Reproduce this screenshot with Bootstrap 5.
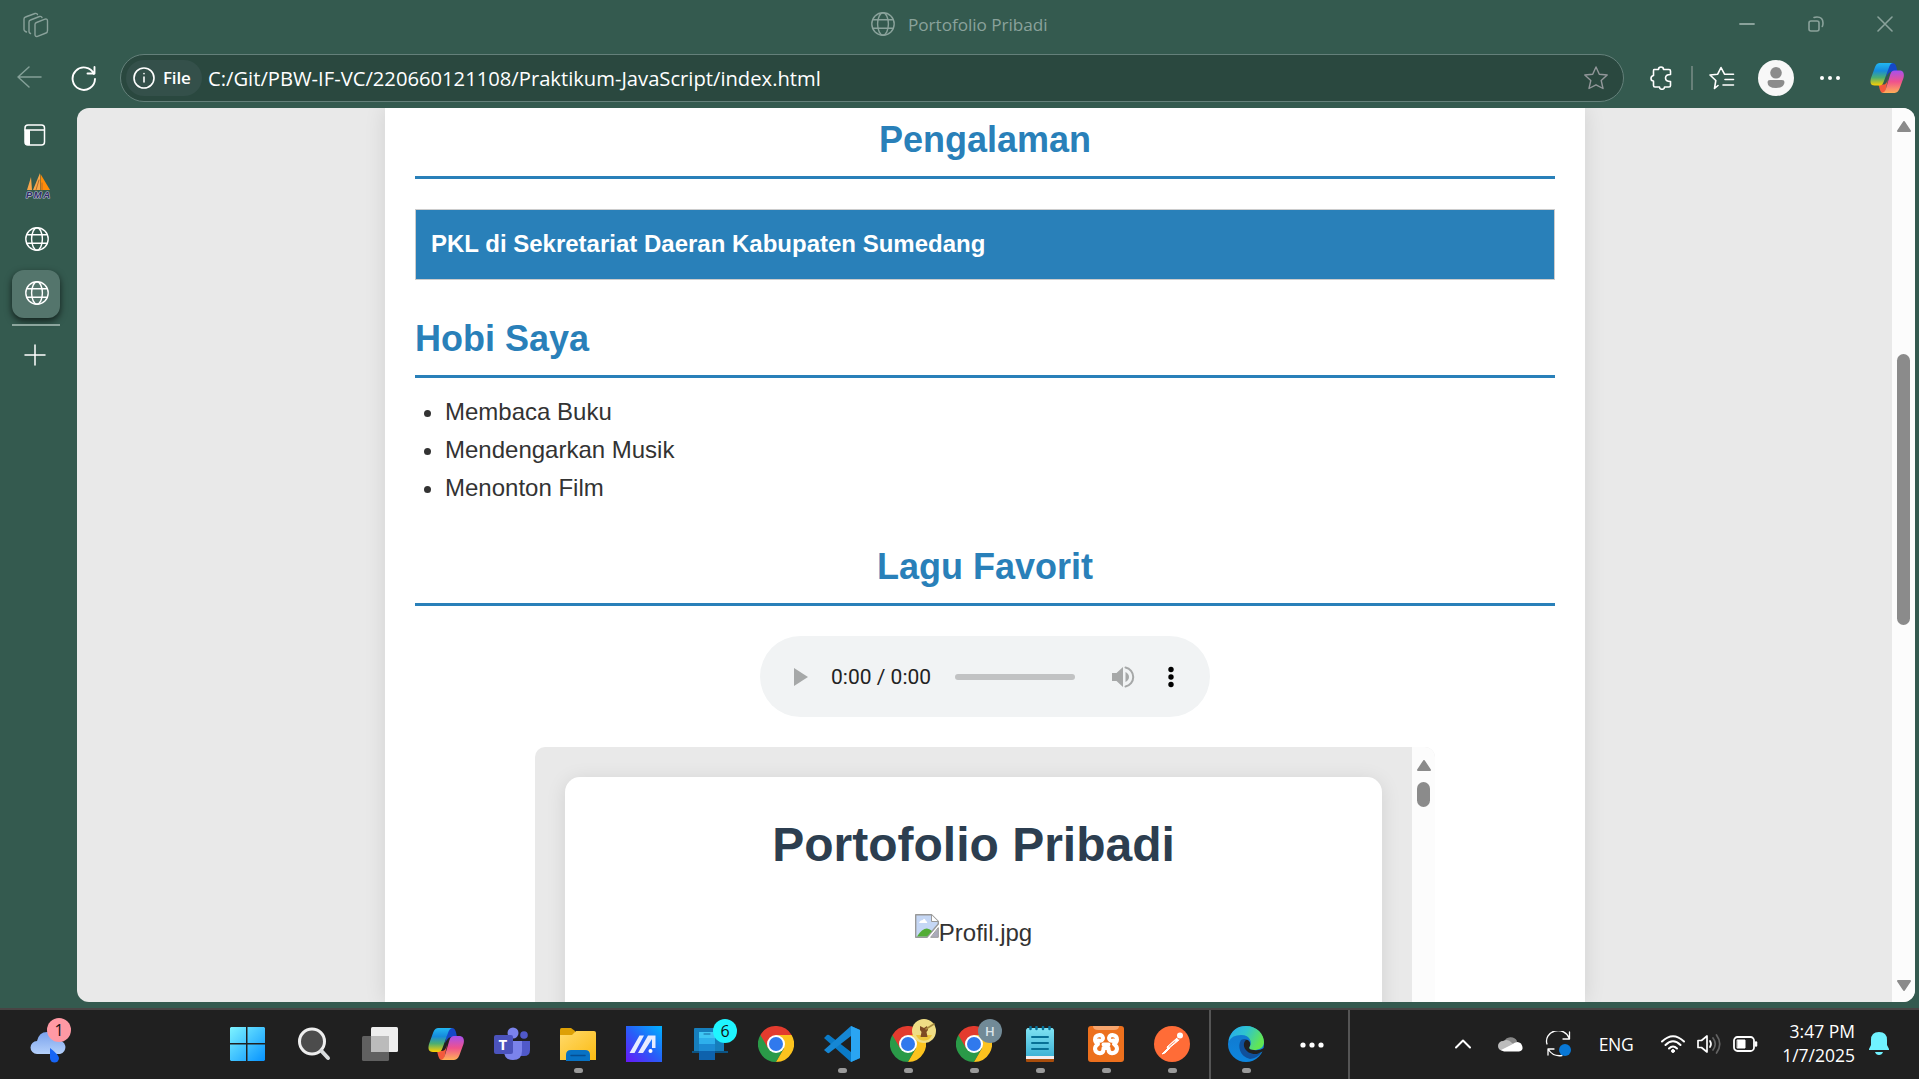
<!DOCTYPE html>
<html lang="id">
<head>
<meta charset="utf-8">
<title>Portofolio Pribadi</title>
<link href="https://cdn.jsdelivr.net/npm/bootstrap@5.3.0/dist/css/bootstrap.min.css" rel="stylesheet">
<style>
  :root { --frame:#345a4f; --blue:#2980b9; }
  body { background:var(--frame); color:#fff; font-family:"Open Sans","Noto Sans",sans-serif; height:1079px; }
  svg { display:block; flex:none; fill:none; stroke-linecap:round; stroke-linejoin:round; }
  .titlebar { height:54px; color:#8aa29b; }
  .titlebar .win-title { font-size:17.2px; letter-spacing:-.05px; }
  .titlebar .edge-l { width:870px; padding-left:23px; }
  .win-controls { width:206px; margin-left:auto; padding-bottom:6px; }
  .win-cell { width:69px; }
  .toolbar { height:54px; }
  .nav-cell { width:54px; }
  .address { width:1504px; height:48px; border:1.5px solid #64807a; border-radius:24px; background:#2a483f; padding:0 15px 0 5px; }
  .file-chip { height:36px; width:76px; border-radius:18px; background:#34504a; padding-left:7px; font-size:17px; font-weight:600; letter-spacing:-.2px; }
  .url { font-size:20.2px; letter-spacing:0; margin-left:6px; padding-top:1px; }
  .side { width:77px; }
  .side-cell { width:72px; height:54px; }
  .tab-active { width:48px; height:48px; border-radius:12px; background:#54756c; box-shadow:0 3px 7px rgba(0,0,0,.65); }
  .page { width:1838px; height:894px; border-radius:12px; background:#e9e9e9; color:#333; font-family:"Liberation Sans",Arial,sans-serif; font-size:24px; line-height:38px; }
  .sheet { width:1200px; margin-left:308px; background:#fff; box-shadow:0 0 20px rgba(0,0,0,.1); padding:3px 30px 0; }
  .sheet h2 { font-size:36px; line-height:57px; font-weight:700; color:var(--blue); border-bottom:3px solid var(--blue); padding-bottom:8px; margin:0; }
  .job { margin:30px 0; height:71px; border:1px solid #ccc; background:var(--blue); color:#fff; font-weight:700; padding-left:15px; padding-bottom:1px; }
  .hobbies { margin:15px 0 31px; padding-left:30px; }
  .scroller { width:23px; background:#fcfcfc; }
  .thumb { background:#8b8b8b; border-radius:7px; width:13px; }
  .player { width:450px; height:81px; border-radius:41px; background:#f1f3f4; margin:30px auto; font-family:Roboto,sans-serif; font-size:21px; color:#222; padding-left:34px; }
  .player .clock { width:101px; margin-left:23px; }
  .player .track { width:120px; height:6px; border-radius:3px; background:#c1c2c3; margin-left:23px; }
  .embed { width:900px; height:300px; border-radius:10px 10px 0 0; background:#e9e9e9; margin:0 auto; }
  .inner-sheet { width:817px; margin:30px 30px 0; border-radius:15px 15px 0 0; background:#fff; box-shadow:0 3px 20px rgba(0,0,0,.1); padding-top:29px; }
  .inner-sheet h1 { font-size:48px; line-height:77px; font-weight:700; color:#2c3e50; margin:0 0 31px; }
  .alt-pic { height:38px; }
  .taskbar { height:71px; margin-top:6px; background:#202020; border-top:2px solid #484444; }
  .taskbar > * { flex:none; }
  .widgets { width:215px; padding-left:30px; }
  .app { width:66px; height:69px; padding-bottom:1px; }
  .app.run::after { content:""; position:absolute; bottom:6px; left:calc(50% - 4.5px); width:9px; height:5px; border-radius:3px; background:#9a9a9a; }
  .app-start { padding-right:3px; }
  .app.ruled { border-left:2px solid #555; width:72px; margin-left:4px; }
  .more { width:67px; padding-right:5px; }
  .bubble { position:absolute; left:37px; top:9px; width:24px; height:24px; border-radius:50%; font-size:16px; line-height:24px; text-align:center; color:#111; }
  .bub-pink { left:47px; top:8px; background:#ff99a4; }
  .bub-cyan { background:#1ff5ff; left:36px; }
  .bub-gold { background:#f0de85; } .bub-grey { background:#718a97; color:#dbe4e8; font-size:13px; font-weight:600; }
  .tray { margin-left:auto; width:480px; font-size:17.5px; letter-spacing:-.4px; padding-bottom:1px; }
  .tray-cell { width:48px; } .lang { width:66px; margin-right:6px; } .quick { width:36px; }
  .clock-date { width:92px; line-height:24px; text-align:right; letter-spacing:0; padding-bottom:3px; }
  .bell { width:64px; padding-left:14px; }
</style>
</head>
<body class="d-flex flex-column overflow-hidden">
<svg width="0" height="0" class="position-absolute">
  <defs>
    <linearGradient id="gl" x1="0" y1="0" x2="0" y2="1"><stop offset="0" stop-color="#22b7f2"/><stop offset=".35" stop-color="#168bdc"/><stop offset=".65" stop-color="#4cae72"/><stop offset="1" stop-color="#ffd000"/></linearGradient>
    <linearGradient id="gr" x1="0" y1="0" x2="0" y2="1"><stop offset="0" stop-color="#a650ee"/><stop offset=".5" stop-color="#f0528c"/><stop offset="1" stop-color="#ffb057"/></linearGradient>
    <linearGradient id="win" x1="0" y1="0" x2="1" y2="1"><stop offset="0" stop-color="#7ef4ff"/><stop offset="1" stop-color="#0793ff"/></linearGradient>
    <linearGradient id="ma" x1="0" y1="1" x2="1" y2="0"><stop offset="0" stop-color="#6817f7"/><stop offset=".5" stop-color="#275ff8"/><stop offset="1" stop-color="#00b3ff"/></linearGradient>
    <linearGradient id="fold" x1="0" y1="0" x2="1" y2="1"><stop offset="0" stop-color="#ffda6b"/><stop offset="1" stop-color="#fbbb12"/></linearGradient>
    <linearGradient id="cl" x1="0" y1="0" x2="0" y2="1"><stop offset="0" stop-color="#7aa2ec"/><stop offset="1" stop-color="#b4d0fb"/></linearGradient>
    <linearGradient id="eg" x1="0" y1="0" x2="1" y2=".4"><stop offset="0" stop-color="#25a8f0"/><stop offset=".5" stop-color="#2fc4cf"/><stop offset="1" stop-color="#62e653"/></linearGradient>
    <linearGradient id="eb" x1="0" y1="0" x2="0" y2="1"><stop offset="0" stop-color="#1277cb"/><stop offset="1" stop-color="#0d86df"/></linearGradient>
    <linearGradient id="note" x1="0" y1="0" x2="0" y2="1"><stop offset="0" stop-color="#7fe3f3"/><stop offset="1" stop-color="#3fb3d6"/></linearGradient>
    <symbol id="globe" viewBox="0 0 24 24"><g stroke="currentColor" stroke-width="1.4"><circle cx="12" cy="12" r="11.2"/><ellipse cx="12" cy="12" rx="5.4" ry="11.2"/><path d="M1.8 7.8H22.2M1.8 16.2H22.2"/></g></symbol>
    <symbol id="copilot" viewBox="0 0 36 34">
      <path d="M20 1H24C27 1 28 4 29 10H24C20 10 19 13 17 16Z" fill="#1548c8"/>
      <path d="M16 33H14C11 33 10.500 30 9 24H14C17 24 18 21 19 18Z" fill="#f4593c"/>
      <path d="M11 1H25C22 1 21 3 20 6L14.500 21C13.500 24 12 25 10 25H5C0 25 0 21 1 17L5 6C6.500 2 8 1 11 1Z" fill="url(#gl)"/>
      <path d="M25 33H12C15 33 16 31 17 28L21.500 13C22.500 10 24 9 26 9H31C36 9 36.500 13 35.500 17L31.500 28C30 32 28 33 25 33Z" fill="url(#gr)"/>
    </symbol>
    <symbol id="chrome" viewBox="0 0 36 36">
      <path d="M18 18L2.400 9A18 18 0 0 0 18 36L26 22Z" fill="#2a9a48"/><path d="M18 9H33.600A18 18 0 0 1 18 36L25.800 22.500Z" fill="#fcc31e"/><path d="M2.400 9A18 18 0 0 1 33.600 9H18L10.200 22.500Z" fill="#e33b2e"/>
      <circle cx="18" cy="18" r="9" fill="#fff"/><circle cx="18" cy="18" r="7" fill="#3079ed"/>
    </symbol>
  </defs>
</svg>

<header class="titlebar d-flex">
  <div class="edge-l d-flex align-items-center pb-1">
    <svg width="26" height="26" viewBox="0 0 26 26" stroke="currentColor" stroke-width="1.4"><path d="M3.500 20L2.500 19.500Q1 18.800 1 17.500V7Q1 5.500 2.500 5L12 1.500Q14 1 14.500 2.500M7.500 21.500Q6 21 6 19.500V10Q6 8.500 7.500 8L16.500 4.500Q18.500 4 19 5.500"/><path d="M12 12.500Q12 11 13.500 10.500L22 7.200Q24.500 6.500 24.500 9V18.500Q24.500 20.500 23 21L14.500 24.300Q12 25 12 22.500Z"/></svg>
  </div>
  <div class="d-flex align-items-center pb-1 mb-1"><svg width="26" height="24" class="me-2" style="margin-top:2px"><use href="#globe"/></svg><span class="win-title pt-1 ms-1">Portofolio Pribadi</span></div>
  <div class="win-controls d-flex">
    <div class="win-cell d-flex align-items-center justify-content-center"><svg width="16" height="16" stroke="currentColor" stroke-width="1.800"><path d="M1 8H15"/></svg></div>
    <div class="win-cell d-flex align-items-center justify-content-center"><svg width="16" height="16" stroke="currentColor" stroke-width="1.600"><rect x="1" y="5" width="10" height="10" rx="2"/><path d="M6 1.500Q7 1 9 1Q15 1 15 7Q15 9 14.300 10.500"/></svg></div>
    <div class="win-cell d-flex align-items-center justify-content-center"><svg width="16" height="16" stroke="currentColor" stroke-width="1.600"><path d="M1 1L15 15M15 1L1 15"/></svg></div>
  </div>
</header>

<nav class="toolbar d-flex align-items-start">
  <div class="d-flex align-items-center h-100 pb-2" style="width:120px">
    <div class="ps-3 nav-cell"><svg width="26" height="24" stroke="#84a098" stroke-width="1.500"><path d="M25 12H2M13 2L2 12L13 22"/></svg></div>
    <div class="nav-cell ps-3"><svg width="28" height="26" stroke="#fff" stroke-width="1.900" class="mt-1"><path d="M24 8A11.200 11.200 0 1 0 25 13M24.500 1V7.500H17.500"/></svg></div>
  </div>
  <div class="address d-flex align-items-center">
    <div class="file-chip d-flex align-items-center"><svg width="22" height="22" stroke="#fff" stroke-width="1.600"><circle cx="11" cy="11" r="10"/><path d="M11 10V15M11 6.500V6.700"/></svg><span class="ms-2">File</span></div>
    <span class="url">C:/Git/PBW-IF-VC/220660121108/Praktikum-JavaScript/index.html</span>
    <svg class="ms-auto" width="24" height="24" stroke="#92979a" stroke-width="1.400"><path d="M12 1L15.300 8.200L23.200 9L17.200 14.500L19 22.500L12 18.800L5 22.500L6.800 14.500L.8 9L8.700 8.200Z"/></svg>
  </div>
  <div class="d-flex align-items-center" style="height:48px">
    <svg width="22" height="24" viewBox="0 0 22 24" stroke="#fff" stroke-width="1.600" class="me-4" style="margin-left:26px"><path d="M4 3.500H8.500Q8.500 1 11 1T13.500 3.500H19Q20.500 3.500 20.500 5V8.500Q15.500 8.500 15.500 12T20.500 15.500V19.500Q20.500 21 19 21H14.500Q14.500 23.300 12 23.300T9.500 21H5Q3.500 21 3.500 19.500V15Q1 15 1 12.500T3.500 9.500V5Q3.500 3.500 4 3.500Z"/></svg>
    <div style="width:2px;height:24px;background:#688079;margin-left:-5px"></div>
    <svg width="26" height="24" class="ms-3" stroke="#fff" stroke-width="1.600"><path d="M9 19.500L5.500 22.500L6.800 14.500L1 9L8.700 8.200L12 1.500L15.500 8.200H24.500M16 13.500H24.500M14 19H24.500"/></svg>
    <svg width="36" height="36" style="margin-left:23px"><circle cx="18" cy="18" r="18" fill="#f8f8f8"/><circle cx="18" cy="12.800" r="5.800" fill="#8b8b8b"/><path d="M12 20H24Q26.500 20 26.500 22Q26.500 28 18 28T9.500 22Q9.500 20 12 20Z" fill="#8b8b8b"/></svg>
    <svg width="22" height="6" style="margin-left:25px"><g fill="#fff"><circle cx="3" cy="3" r="2"/><circle cx="11" cy="3" r="2"/><circle cx="19" cy="3" r="2"/></g></svg>
    <svg width="34" height="32" style="margin-left:29px"><use href="#copilot"/></svg>
  </div>
</nav>

<main class="d-flex flex-grow-0">
  <aside class="side d-flex flex-column">
    <div class="side-cell d-flex align-items-center ps-4"><svg width="22" height="22" stroke="#fff" stroke-width="1.500"><rect x="1" y="1" width="19.500" height="20" rx="3"/><path d="M1 6H20"/><path d="M1 6H6V21H3Q1 21 1 19Z" fill="#fff" stroke="none"/></svg></div>
    <div class="side-cell d-flex align-items-center justify-content-center pb-1 ps-1"><svg width="26" height="26" viewBox="0 0 26 26" style="margin-top:-2px"><path d="M2 17L6 4L7 17ZM8 17L15 0V17Z" fill="#f7a64b"/><path d="M15.500 1L25 17H15.500Z" fill="#ff8c08"/><path d="M11 17L14 7M17 17V10" stroke="#b56a2a"/><text x="1" y="24.500" font-family="Liberation Sans" font-size="9.500" font-weight="bold" font-style="italic" textLength="24" fill="#302b65" stroke="#b8bfd3" stroke-width="1.200" paint-order="stroke">PMA</text></svg></div>
    <div class="side-cell d-flex align-items-center justify-content-center pb-1 mt-1"><svg width="24" height="24" style="margin:-12px 0 0 2px"><use href="#globe"/></svg></div>
    <div class="side-cell d-flex align-items-start justify-content-center"><div class="tab-active d-flex align-items-center justify-content-center" style="margin-top:-4px"><svg width="24" height="24" style="margin:-2px 0 0 2px"><use href="#globe"/></svg></div></div>
    <div class="side-cell d-flex flex-column align-items-center"><div style="width:48px;height:2px;background:#8ca59d;margin-top:-4px"></div><svg width="22" height="22" style="margin:18px 2px 0 0" stroke="#fff" stroke-width="1.500"><path d="M1 11H21M11 1V21"/></svg></div>
  </aside>
  <div class="page d-flex overflow-hidden">
    <section class="sheet">
      <h2 class="text-center">Pengalaman</h2>
      <div class="job d-flex align-items-center">PKL di Sekretariat Daeran Kabupaten Sumedang</div>
      <h2>Hobi Saya</h2>
      <ul class="hobbies"><li>Membaca Buku</li><li>Mendengarkan Musik</li><li>Menonton Film</li></ul>
      <h2 class="text-center">Lagu Favorit</h2>
      <div class="player d-flex align-items-center">
        <svg width="14" height="18"><path d="M0 0L14 9L0 18Z" fill="#a6a8a8"/></svg>
        <span class="clock text-nowrap">0:00 / 0:00</span><div class="track"></div>
        <svg width="24" height="24" style="margin-left:36px"><path d="M1 8H5.500L12 2V22L5.500 16H1ZM14.500 7Q18 9 18 12T14.500 17Z" fill="#a6a8a8"/><path d="M14.500 2.500A9.700 9.700 0 0 1 14.500 21.500" stroke="#a6a8a8" stroke-width="2"/></svg>
        <svg width="6" height="22" style="margin-left:33px"><g fill="#000"><circle cx="3" cy="3.500" r="2.700"/><circle cx="3" cy="11" r="2.700"/><circle cx="3" cy="18.500" r="2.700"/></g></svg>
      </div>
      <div class="embed d-flex overflow-hidden">
        <div class="inner-sheet text-center"><h1>Portofolio Pribadi</h1>
          <div class="alt-pic d-flex justify-content-center align-items-start"><svg width="24" height="24"><path d="M.7.7H16.500L23.300 7.500V10L12 23.300H.7Z" fill="#c5d7f5" stroke="#999" stroke-width="1.400"/><path d="M16.500 1V7.500H23" fill="#fff" stroke="#999"/><path d="M4 9Q5 6 8 6Q9 3 11 7Q13 8 12 9Z" fill="#fff"/><path d="M2 22.500Q10 10 17 17L12 22.500Z" fill="#53ad36"/><path d="M23.300 14V23.300H16Z" fill="#aab" stroke="#999"/></svg><span>Profil.jpg</span></div></div>
        <div class="scroller d-flex flex-column align-items-center"><svg width="14" height="11" style="margin-top:13px"><path d="M7 1L13 10H1Z" fill="#8b8b8b" stroke="#8b8b8b" stroke-width="2"/></svg><div class="thumb" style="height:25px;margin-top:11px"></div></div>
      </div>
    </section>
    <div class="scroller d-flex flex-column align-items-center ms-auto"><svg width="14" height="11" style="margin-top:13px"><path d="M7 1L13 10H1Z" fill="#8b8b8b" stroke="#8b8b8b" stroke-width="2"/></svg><div class="thumb" style="height:271px;margin-top:222px"></div><svg class="mt-auto mb-2" width="14" height="14"><path d="M7 10L13 1H1Z" fill="#8b8b8b" stroke="#8b8b8b" stroke-width="2"/></svg></div>
  </div>
</main>

<footer class="taskbar d-flex">
  <div class="widgets position-relative d-flex align-items-center">
    <svg width="36" height="36" viewBox="0 0 36 36"><path d="M7 27A6.500 6.500 0 0 1 7 14Q9 5 17 5T27 13.500A6.800 6.800 0 0 1 30 27Z" fill="url(#cl)"/><path d="M20 21Q29 28 29 31A4.500 4.500 0 0 1 20 31Z" fill="#1765f5"/></svg><span class="bubble bub-pink">1</span>
  </div>
  <div class="app app-start position-relative d-flex align-items-center justify-content-center"><svg width="36" height="36"><path d="M2 1H17V17H1V2ZM18.500 1H35L36 2V17H18.500ZM1 18.500H17V35H2L1 34ZM18.500 18.500H36V34L35 35H18.500Z" fill="url(#win)"/></svg></div>
  <div class="app position-relative d-flex align-items-center justify-content-center"><svg width="36" height="36"><circle cx="16" cy="15.500" r="12.500" fill="#4c4c4c" stroke="#eee" stroke-width="3"/><path d="M25.500 25L32 32" stroke="#d9dcde" stroke-width="4"/></svg></div>
  <div class="app position-relative d-flex align-items-center justify-content-center"><svg width="36" height="36"><rect y="10" width="27" height="25" rx="1.500" fill="#606060"/><rect x="9" y="1" width="27" height="25" rx="1.500" fill="#eee"/><path d="M9 10H27V26H9Z" fill="#bbb"/></svg></div>
  <div class="app position-relative d-flex align-items-center justify-content-center"><svg width="36" height="34"><use href="#copilot"/></svg></div>
  <div class="app position-relative d-flex align-items-center justify-content-center"><svg width="36" height="36"><circle cx="19" cy="7" r="5.500" fill="#7b83eb"/><circle cx="30" cy="9" r="3.800" fill="#5059c9"/><path d="M24 15H36V24Q36 30 30 30H25Z" fill="#5059c9"/><path d="M10 15H28V25Q28 34 19 34T10 25Z" fill="#7b83eb"/><rect y="9" width="19" height="19" rx="2" fill="#4b53bc"/><text x="4.500" y="24" font-family="Open Sans" font-size="15" font-weight="bold" fill="#fff">T</text></svg></div>
  <div class="app run position-relative d-flex align-items-center justify-content-center"><svg width="36" height="36"><path d="M0 3.500Q0 2 1.500 2H11L15 5V10H0Z" fill="#dda006"/><path d="M0 9H12L16 5H34Q36 5 36 7V34H0Z" fill="url(#fold)"/><path d="M6 35V29Q6 24 11 24H25Q30 24 30 29V35Z" fill="#0872c4"/><path d="M11 29.500H25" stroke="#054e91" stroke-width="1.500"/></svg></div>
  <div class="app position-relative d-flex align-items-center justify-content-center"><svg width="36" height="36"><path d="M0 0H36V36H0Z" fill="url(#ma)"/><path d="M3.500 27L13.500 9.500H18L8.500 27ZM12 27L22 9.500H29.500V22H26V13L17 27Z" fill="#e8ecff"/><circle cx="24.500" cy="25" r="2" fill="#fff"/></svg></div>
  <div class="app position-relative d-flex align-items-center justify-content-center"><svg width="36" height="36"><path d="M2 3Q2 2 3 2H32V25H2Z" fill="#167ebc"/><path d="M0 25H36V27H0Z" fill="#0c5484"/><path d="M7 6H23V34H7Z" fill="#3fc6f4"/><path d="M7 12H23V34H7Z" fill="#2eb0ec"/><path d="M7 18H23V34H7Z" fill="#1c8bd3"/><path d="M7 25H23V34H7Z" fill="#0e62ad"/><path d="M12 8H18" stroke="#17669e"/></svg><span class="bubble bub-cyan">6</span></div>
  <div class="app position-relative d-flex align-items-center justify-content-center"><svg width="36" height="36"><use href="#chrome"/></svg></div>
  <div class="app run position-relative d-flex align-items-center justify-content-center"><svg width="36" height="36"><path d="M27 0L36 4V32L27 36L0 12L3 9Q4 8.500 5 9L27 26Z" fill="#0a7bc8"/><path d="M27 0V10L5 27Q4 27.500 3 26.500L0 24Z" fill="#1687d4"/><path d="M27 0L36 4V32L27 36Z" fill="#2aa5f2"/></svg></div>
  <div class="app run position-relative d-flex align-items-center justify-content-center"><svg width="36" height="36"><use href="#chrome"/></svg><span class="bubble bub-gold"><svg width="24" height="24"><path d="M4 16A8.500 8.500 0 0 0 20 16Z" fill="#edc63d"/><path d="M8 7L12 9L15 7L16 11L14.500 13L15.500 18H8.500L9.500 13L8 11Z" fill="#7d4923"/><path d="M14 10L22 5" stroke="#a78a3d" stroke-width="1.500"/></svg></span></div>
  <div class="app run position-relative d-flex align-items-center justify-content-center"><svg width="36" height="36"><use href="#chrome"/></svg><span class="bubble bub-grey">H</span></div>
  <div class="app run position-relative d-flex align-items-center justify-content-center"><svg width="30" height="36"><path d="M1 28H29V35Q29 36 28 36H2Q1 36 1 35Z" fill="#a94d0b"/><path d="M1 28H29V33H1Z" fill="#f4eef0"/><path d="M2.500 2H27.500L29 3.500V30H1V3.500Z" fill="url(#note)"/><path d="M5.500 1V3M11.500 1V3M18 1V3M24.500 1V3" stroke="#067097" stroke-width="2.500"/><path d="M7 11H23M7 17H23M7 23H23" stroke="#077096" stroke-width="2"/></svg></div>
  <div class="app run position-relative d-flex align-items-center justify-content-center"><svg width="36" height="36"><rect width="36" height="36" rx="3" fill="#ed701d"/><path d="M5 0H31Q31 4 26 4H10Q5 4 5 0Z" fill="#f7a56d"/><path d="M10.500 14.500Q15 15.500 15 12Q14.500 9 11.500 9Q7 9.500 7 13.500Q7.200 16.500 10 18Q7 20 7 23Q7.500 27 12 27.200Q15.500 27 15.500 23V22H20.500V23Q20.500 27 24 27.200Q28.500 27 29 23Q29 20 26 18Q28.800 16.500 29 13.500Q29 9.500 24.500 9Q21.500 9 21 12Q21 15.500 25.500 14.500M15.500 18.500H20.500" stroke="#fff" stroke-width="4"/></svg></div>
  <div class="app run position-relative d-flex align-items-center justify-content-center"><svg width="36" height="36"><circle cx="18" cy="18" r="18" fill="#ff6c37"/><circle cx="26" cy="9.500" r="3" fill="#fff"/><path d="M23 12L13 21L14 23L25 14M14 22L8 28L11 27L16 22" fill="#fff" stroke="#fff"/><path d="M15 20.500L21 15.500" stroke="#ff6c37" stroke-width=".8"/></svg></div>
  <div class="app run ruled position-relative d-flex align-items-center justify-content-center"><svg width="36" height="36"><circle cx="18" cy="18" r="18" fill="url(#eb)"/><path d="M1 13Q5 0 18 0C29 0 36 8 36 16C36 22 31 24 26 24C21 24 20 22 22 20C24 17 23 9 13 9Q4 9 1 15Z" fill="url(#eg)"/><path d="M13 14C9 20 12 31 22 33Q30 32 33.500 26C28 29 18 27 18 18Q18 15 20 14Q17 12 13 14Z" fill="#10509b"/><path d="M18 14C13 18 17 29 29 28L33.500 26L36 25L36 22Q31 25 26 24C20 24 21 21 22 20Q23 16 20 14Z" fill="#202020"/></svg></div>
  <div class="more d-flex align-items-center justify-content-center"><svg width="26" height="8"><g fill="#fff"><circle cx="4" cy="4" r="2.600"/><circle cx="13" cy="4" r="2.600"/><circle cx="22" cy="4" r="2.600"/></g></svg></div>
  <div style="width:2px;background:#555"></div>
  <div class="tray d-flex align-items-center">
    <div class="tray-cell"><svg class="mx-auto" width="18" height="12" stroke="#fff" stroke-width="2"><path d="M2 9.500L9 2.500L16 9.500"/></svg></div>
    <div class="tray-cell"><svg class="mx-auto" width="26" height="18"><path d="M6 7A7.200 7.200 0 0 1 19 6L18 12H6Z" fill="#888"/><path d="M5 16A5 5 0 0 1 5 6Q10 3 14 8L20 12L9 16Z" fill="#bcbcbc"/><path d="M3 15L14 9.500Q19 5 23 8.500Q27 15 21 16.500H6Z" fill="#fff"/></svg></div>
    <div class="tray-cell"><svg class="mx-auto" width="28" height="26" stroke="#fff" stroke-width="1.300"><path d="M2 13A11 10 0 0 1 24 7M24.500 1V8H18M3 24V18H9M3 18Q8 26 17 24.500"/><circle cx="20" cy="19" r="6" fill="#0878d7" stroke="none"/></svg></div>
    <div class="lang text-center">ENG</div>
    <div class="quick"><svg class="mx-auto" width="26" height="20" stroke="#fff" stroke-width="2"><path d="M2 7.500Q13-3 24 7.500M5.500 11Q13 3.500 20.500 11M9 14.500Q13 10.500 17 14.500"/><circle cx="13" cy="17" r="1.500" fill="#fff" stroke-width="1"/></svg></div>
    <div class="quick"><svg class="mx-auto" width="26" height="22" stroke="#fff" stroke-width="1.700"><path d="M2 7.500H5.500L11 3V19L5.500 14.500H2ZM14 8Q16 11 14 14"/><path d="M17 5Q21.500 11 17 17M20.500 2Q27 11 20.500 20" stroke="#636363"/></svg></div>
    <div class="quick"><svg class="mx-auto" width="26" height="18" stroke="#fff" stroke-width="1.800"><rect x="2" y="2" width="20" height="14" rx="3.500"/><path d="M5.500 5H13V13H5.500Z" fill="#fff" stroke-width="1"/><path d="M24 7.500V10.500" stroke-width="2.500"/></svg></div>
    <div class="clock-date">3:47 PM<br>1/7/2025</div>
    <div class="bell"><svg width="20" height="24"><path d="M10 0Q18 0 18 8V13L20 17V18H0V17L2 13V8Q2 0 10 0ZM6 20H14Q13 23 10 23T6 20Z" fill="#70f2ff"/></svg></div>
  </div>
</footer>
<script src="https://cdn.jsdelivr.net/npm/bootstrap@5.3.0/dist/js/bootstrap.bundle.min.js"></script>
</body>
</html>
